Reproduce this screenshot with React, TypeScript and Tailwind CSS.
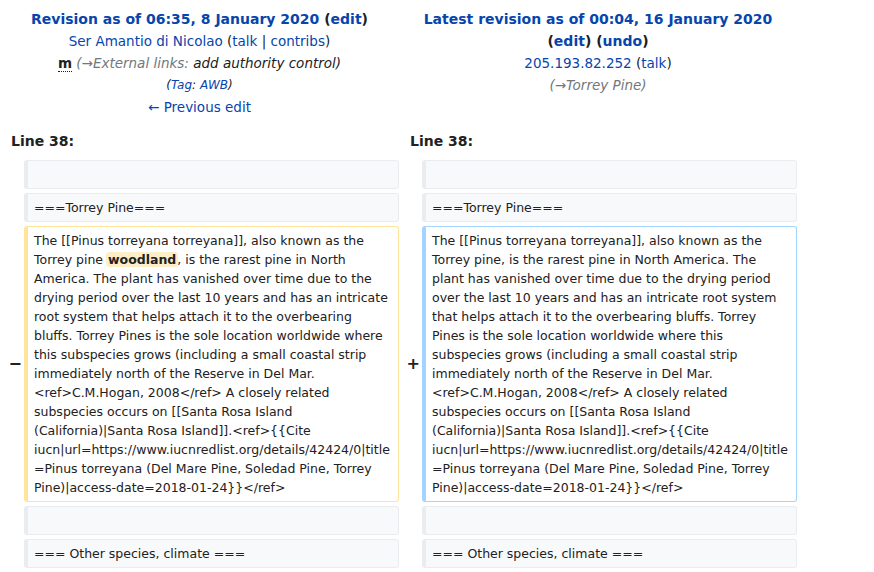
import * as React from "react";

const link = "text-[#0645ad]";

const oldLines: React.ReactNode[] = [
  "The [[Pinus torreyana torreyana]], also known as the",
  <>
    Torrey pine{" "}
    <span className="-mx-[1px] rounded-[3px] bg-[#feeec8] px-[2px] font-bold">woodland</span>, is the rarest pine in North
  </>,
  "America. The plant has vanished over time due to the",
  "drying period over the last 10 years and has an intricate",
  "root system that helps attach it to the overbearing",
  "bluffs. Torrey Pines is the sole location worldwide where",
  "this subspecies grows (including a small coastal strip",
  "immediately north of the Reserve in Del Mar.",
  "<ref>C.M.Hogan, 2008</ref> A closely related",
  "subspecies occurs on [[Santa Rosa Island",
  "(California)|Santa Rosa Island]].<ref>{{Cite",
  "iucn|url=https://www.iucnredlist.org/details/42424/0|title",
  "=Pinus torreyana (Del Mare Pine, Soledad Pine, Torrey",
  "Pine)|access-date=2018-01-24}}</ref>",
];

const newLines: React.ReactNode[] = [
  "The [[Pinus torreyana torreyana]], also known as the",
  "Torrey pine, is the rarest pine in North America. The",
  "plant has vanished over time due to the drying period",
  "over the last 10 years and has an intricate root system",
  "that helps attach it to the overbearing bluffs. Torrey",
  "Pines is the sole location worldwide where this",
  "subspecies grows (including a small coastal strip",
  "immediately north of the Reserve in Del Mar.",
  "<ref>C.M.Hogan, 2008</ref> A closely related",
  "subspecies occurs on [[Santa Rosa Island",
  "(California)|Santa Rosa Island]].<ref>{{Cite",
  "iucn|url=https://www.iucnredlist.org/details/42424/0|title",
  "=Pinus torreyana (Del Mare Pine, Soledad Pine, Torrey",
  "Pine)|access-date=2018-01-24}}</ref>",
];

function ContextCell({ text }: { text?: string }) {
  return (
    <div className="min-h-[29px] rounded-[3px] border border-l-4 border-[#eaecf0] bg-[#f8f9fa] px-[6px] py-[4px] text-[12.5px] leading-[19px]">
      {text ?? "\u00a0"}
    </div>
  );
}

function ChangeCell({ lines, kind }: { lines: React.ReactNode[]; kind: "del" | "add" }) {
  const border = kind === "del" ? "border-[#ffe49c]" : "border-[#a3d3ff]";
  return (
    <div className={`rounded-[3px] border border-l-4 ${border} bg-white px-[6px] py-[4px] text-[12.5px] leading-[19px]`}>
      {lines.map((l, i) => (
        <div key={i} className="whitespace-nowrap">
          {l}
        </div>
      ))}
    </div>
  );
}

export default function App() {
  return (
    <div
      className="h-[572px] w-[874px] overflow-hidden bg-white text-[#202122]"
      style={{ fontFamily: '"DejaVu Sans", sans-serif' }}
    >
      <div className="grid w-[797px] grid-cols-[24px_375px_23px_375px] gap-y-[4px]">
        {/* headers */}
        <div className="col-span-2 flex flex-col items-center pt-[8px] text-[13.5px] leading-[22px]">
          <div className="text-[14px] font-bold">
            <span className={link}>Revision as of 06:35, 8 January 2020</span> (
            <span className={link}>edit</span>)
          </div>
          <div>
            <span className={link}>Ser Amantio di Nicolao</span> (<span className={link}>talk</span> |{" "}
            <span className={link}>contribs</span>)
          </div>
          <div>
            <abbr className="font-bold no-underline border-b border-dotted border-[#202122]">m</abbr>{" "}
            <span className="italic">
              <span className="text-[#72777d]">(→External links:</span> add authority control)
            </span>
          </div>
          <div className="text-[12px] italic">
            (<span className={link}>Tag</span>: <span className={link}>AWB</span>)
          </div>
          <div className={link}>← Previous edit</div>
        </div>
        <div className="col-span-2 flex flex-col items-center pt-[8px] text-[13.5px] leading-[22px]">
          <div className={`text-[14px] font-bold ${link}`}>Latest revision as of 00:04, 16 January 2020</div>
          <div className="text-[14px] font-bold">
            (<span className={link}>edit</span>) (<span className={link}>undo</span>)
          </div>
          <div>
            <span className={link}>205.193.82.252</span> (<span className={link}>talk</span>)
          </div>
          <div className="italic text-[#72777d]">(→Torrey Pine)</div>
        </div>

        {/* line numbers */}
        <div className="col-span-2 pl-[11px] pt-[8px] pb-[4px] text-[14px] font-bold leading-[22px]">Line 38:</div>
        <div className="col-span-2 pl-[11px] pt-[8px] pb-[4px] text-[14px] font-bold leading-[22px]">Line 38:</div>

        {/* empty context */}
        <div />
        <ContextCell />
        <div />
        <ContextCell />

        <div />
        <ContextCell text="===Torrey Pine===" />
        <div />
        <ContextCell text="===Torrey Pine===" />

        <div className="flex items-center justify-end pr-[2px] text-[16px] font-bold">−</div>
        <ChangeCell lines={oldLines} kind="del" />
        <div className="flex items-center justify-end pr-[2px] text-[16px] font-bold">+</div>
        <ChangeCell lines={newLines} kind="add" />

        <div />
        <ContextCell />
        <div />
        <ContextCell />

        <div />
        <ContextCell text="=== Other species, climate ===" />
        <div />
        <ContextCell text="=== Other species, climate ===" />
      </div>
    </div>
  );
}
